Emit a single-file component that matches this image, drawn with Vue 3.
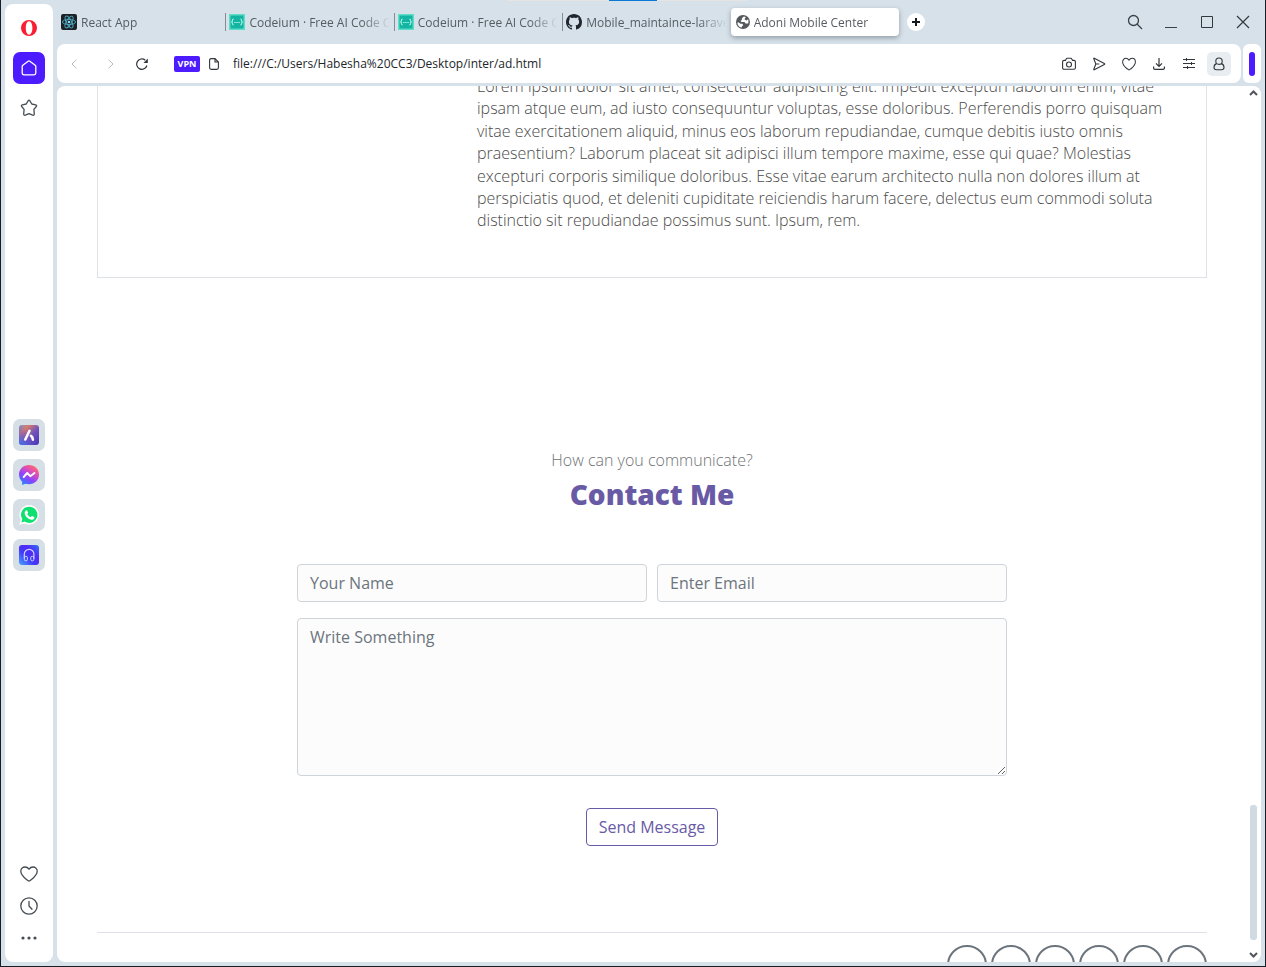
<script setup>
import { ref } from 'vue'

const tabs = [
  { icon: 'react', title: 'React App' },
  { icon: 'codeium', title: 'Codeium · Free AI Code C' },
  { icon: 'codeium', title: 'Codeium · Free AI Code C' },
  { icon: 'github', title: 'Mobile_maintaince-larave' },
  { icon: 'globe', title: 'Adoni Mobile Center' },
]
const active = ref(4)
const address = ref('file:///C:/Users/Habesha%20CC3/Desktop/inter/ad.html')
const name = ref('')
const email = ref('')
const message = ref('')
const socials = ['Facebook', 'Twitter', 'Google', 'Linkedin', 'Github', 'Youtube']
</script>

<template>
  <div class="window">
    <div class="desktop-strip"><span class="strip-accent"></span></div>

    <nav class="sidebar" aria-label="Sidebar">
      <div class="side-group">
        <button class="side-btn" aria-label="Opera menu">
          <svg width="16" height="16" viewBox="0 0 16 16"><path fill="#fa1e32" fill-rule="evenodd" d="M8 0a8 8 0 1 0 0 16A8 8 0 0 0 8 0Zm0 1.3c2 0 3.400 2.900 3.400 6.700S10 14.700 8 14.700 4.800 11.800 4.800 8 6 1.300 8 1.300Z" /></svg>
        </button>
        <button class="side-btn home" aria-label="Start page">
          <svg width="16" height="16" viewBox="0 0 16 16" fill="none" stroke="#fff" stroke-width="1.3" stroke-linejoin="round"><path d="M1.200 6.600Q1.200 5.900 1.800 5.300L7.200 1.200Q8 .6 8.800 1.200L14.200 5.300Q14.800 5.900 14.800 6.600V13Q14.800 14.800 13 14.800H3Q1.200 14.800 1.200 13Z" /></svg>
        </button>
        <button class="side-btn" aria-label="Bookmarks">
          <svg width="18" height="18" viewBox="0 0 18 18" fill="none" stroke="#454d54" stroke-width="1.3" stroke-linejoin="round"><path d="M8.100 1.800Q9 .6 9.900 1.800L11.800 5 15.700 5.800Q17.200 6.300 16.300 7.500L13.900 10.400 14.300 14.900Q14.300 16.600 12.700 16.200L9 14.700 5.300 16.200Q3.700 16.600 3.700 14.900L4.100 10.400 1.700 7.500Q.8 6.300 2.300 5.800L6.200 5Z" /></svg>
        </button>
      </div>

      <div class="side-group apps">
        <button class="side-btn app" aria-label="Aria">
          <svg width="20" height="20" viewBox="0 0 20 20">
            <defs>
              <linearGradient id="aria" x1="0" y1="0" x2="1" y2="1"><stop offset="0" stop-color="#7a9bc8" /><stop offset=".25" stop-color="#d77a6c" /><stop offset=".55" stop-color="#7554b8" /><stop offset="1" stop-color="#4532b8" /></linearGradient>
              <linearGradient id="ariaBlue" x1="0" y1="1" x2=".6" y2=".5"><stop offset="0" stop-color="#3979f5" /><stop offset="1" stop-color="#6a45cf" stop-opacity="0" /></linearGradient>
            </defs>
            <rect width="20" height="20" rx="3" fill="url(#aria)" /><rect width="20" height="20" rx="3" fill="url(#ariaBlue)" />
            <path d="M6.300 14.500 10.500 5.800M12 10.800Q13.600 11.800 13.900 14.600" stroke="#fff" stroke-width="2.600" stroke-linecap="round" fill="none" />
          </svg>
        </button>
        <button class="side-btn app" aria-label="Messenger">
          <svg width="20" height="20" viewBox="0 0 20 20">
            <defs><linearGradient id="msg" x1=".1" y1="1" x2=".75" y2="0"><stop offset="0" stop-color="#0e91ff" /><stop offset=".4" stop-color="#8b42ff" /><stop offset=".75" stop-color="#e64fae" /><stop offset="1" stop-color="#ff6d66" /></linearGradient></defs>
            <path fill="url(#msg)" d="M10 0C4.300 0 0 4.100 0 9.600c0 2.900 1.200 5.400 3.200 7.100V20l3.200-1.200c1.100.3 2.300.5 3.600.5 5.700 0 10-4.100 10-9.700S15.700 0 10 0Z" />
            <path d="m4.700 12 3.500-4 3.100 3.200L15.500 8" fill="none" stroke="#fff" stroke-width="1.900" stroke-linejoin="round" stroke-linecap="round" />
          </svg>
        </button>
        <button class="side-btn app" aria-label="WhatsApp">
          <svg width="20" height="20" viewBox="0 0 20 20">
            <path fill="#fff" d="M10.200 0A9.800 9.800 0 0 0 1.700 14.700L.3 19.800l5.100-1.400A9.800 9.800 0 1 0 10.200 0Z" />
            <path fill="#10e070" d="M10.200 1.700A8.100 8.100 0 0 0 3.300 14.100l-.9 3.300 3.400-.9A8.100 8.100 0 1 0 10.200 1.700Z" />
            <path fill="#fff" d="M7.100 5.500c.4-.3.9-.2 1.100.2l.8 1.800c.1.300 0 .6-.8 1.500.9 1.600 2 2.500 3.600 3.200.7-.9 1-1.300 1.400-1.100l1.900.9c.4.200.4.700.2 1.200-.4 1-1.500 1.600-2.600 1.500-3.300-.4-6.500-3.300-7-6.300-.2-1.200.4-2.300 1.400-2.900Z" />
          </svg>
        </button>
        <button class="side-btn app" aria-label="Player">
          <svg width="20" height="20" viewBox="0 0 20 20">
            <defs><linearGradient id="player" x1="0" y1="1" x2="1" y2="0"><stop offset="0" stop-color="#46a6ff" /><stop offset=".4" stop-color="#4338fa" /><stop offset=".65" stop-color="#5229f5" /><stop offset="1" stop-color="#2f72ff" /></linearGradient></defs>
            <rect width="20" height="20" rx="3" fill="url(#player)" />
            <path d="M5.300 13.500V9.100a4.800 4.800 0 0 1 9.600 0v4.400" fill="none" stroke="#c8d7ff" stroke-width="1.200" />
            <rect x="5.400" y="11.300" width="3" height="4.600" rx="1.400" fill="none" stroke="#c8d7ff" /><rect x="11.800" y="11.300" width="3" height="4.600" rx="1.400" fill="none" stroke="#c8d7ff" />
          </svg>
        </button>
      </div>

      <div class="side-group tight">
        <button class="side-btn" aria-label="Favourites">
          <svg width="18" height="18" viewBox="0 0 18 18" fill="none" stroke="#454d54" stroke-width="1.300" stroke-linejoin="round"><path d="M9 16.200Q8.300 16.200 6.500 14.600C2.800 11.500.8 9.100.8 6.300.8 3.800 2.700 2 5 2c1.800 0 3.200 1 4 2.200C9.800 3 11.200 2 13 2c2.300 0 4.200 1.800 4.200 4.300 0 2.800-2 5.200-5.700 8.300Q9.700 16.200 9 16.200Z" /></svg>
        </button>
        <button class="side-btn" aria-label="History">
          <svg width="18" height="18" viewBox="0 0 18 18" fill="none" stroke="#454d54" stroke-width="1.300" stroke-linecap="round"><circle cx="9" cy="9" r="8.200" /><path d="M9 4.500V9l3 3.300" /></svg>
        </button>
        <button class="side-btn" aria-label="More">
          <svg width="16" height="4" viewBox="0 0 16 4" fill="#454d54"><circle cx="2" cy="2" r="1.600" /><circle cx="8" cy="2" r="1.600" /><circle cx="14" cy="2" r="1.600" /></svg>
        </button>
      </div>
    </nav>

    <div class="main">
      <header class="tabbar">
        <div class="tabs" role="tablist">
          <button v-for="(tab, i) in tabs" :key="i" class="tab" :class="{ active: i === active }" role="tab" :aria-selected="i === active" @click="active = i">
            <svg v-if="tab.icon === 'react'" class="fav" width="16" height="16" viewBox="0 0 16 16"><rect width="16" height="16" rx="2" fill="#1d2126" /><g fill="none" stroke="#4fa9c0" stroke-width=".9"><ellipse cx="8" cy="8" rx="6.600" ry="2.600" /><ellipse cx="8" cy="8" rx="6.600" ry="2.600" transform="rotate(60 8 8)" /><ellipse cx="8" cy="8" rx="6.600" ry="2.600" transform="rotate(120 8 8)" /></g><circle cx="8" cy="8" r="1.300" fill="#8fe0f2" /></svg>
            <svg v-else-if="tab.icon === 'codeium'" class="fav" width="16" height="16" viewBox="0 0 16 16"><rect width="16" height="16" fill="#5ddcc8" /><rect x="1.500" y="1.500" width="13" height="13" fill="#13b5a2" /><path d="M4.600 5q-1.200 0-1.200 1.200v.9q0 .9-.9.900.9 0 .9.900v.9q0 1.200 1.200 1.200M11.400 5q1.200 0 1.200 1.200v.9q0 .9.900.9-.9 0-.9.900v.9q0 1.200-1.200 1.200" fill="none" stroke="#c9fff5" stroke-width="1" /><path d="M5.300 8.500h1.200M7.400 8.500h1.200M9.500 8.500h1.200" stroke="#c9fff5" stroke-width="1.200" /></svg>
            <svg v-else-if="tab.icon === 'github'" class="fav" width="16" height="16" viewBox="0 0 16 16"><path fill="#20262c" d="M8 0C3.580 0 0 3.580 0 8c0 3.540 2.290 6.530 5.470 7.590.4.070.55-.17.55-.38 0-.19-.01-.82-.01-1.490-2.010.37-2.530-.49-2.690-.94-.09-.23-.48-.94-.82-1.130-.28-.15-.68-.52-.01-.53.63-.01 1.080.58 1.230.82.72 1.210 1.870.87 2.330.66.07-.52.28-.87.51-1.070-1.780-.2-3.640-.89-3.640-3.950 0-.87.31-1.590.82-2.150-.08-.2-.36-1.020.08-2.120 0 0 .67-.21 2.200.82.640-.18 1.320-.27 2-.27s1.360.09 2 .27c1.530-1.040 2.200-.82 2.200-.82.44 1.100.16 1.920.08 2.120.51.56.82 1.270.82 2.150 0 3.070-1.870 3.750-3.650 3.950.29.25.54.73.54 1.480 0 1.070-.01 1.930-.01 2.200 0 .21.15.46.55.38A8.010 8.010 0 0 0 16 8c0-4.420-3.580-8-8-8Z" /></svg>
            <svg v-else class="fav globe" width="14" height="14" viewBox="0 0 14 14"><circle cx="7" cy="7" r="7" fill="#55585c" /><path fill="#fff" d="M7.800 1.400 5.900 3.300v1.500L4.500 5.900l1 1h3l1 1.600h2.700Q13 6.200 12.200 4.200L10.400 5.500 8.500 4.200 9.800 2ZM1.400 7.400Q1.500 11.500 5.500 12.500L6.200 11 7.300 10.300 6.400 8.800 4.300 8.700 2.900 7.400Z" /></svg>
            <span class="tab-title">{{ tab.title }}</span>
          </button>
        </div>
        <button class="new-tab" aria-label="New tab"><svg width="8" height="8" viewBox="0 0 8 8" stroke="#15181c" stroke-width="2"><path d="M4 0v8M0 4h8" /></svg></button>
        <div class="win-controls">
          <button aria-label="Search tabs"><svg width="16" height="16" viewBox="0 0 16 16" fill="none" stroke="#3b4146" stroke-width="1.300"><circle cx="6.500" cy="6.500" r="5" /><path d="m10 10 5 5" /></svg></button>
          <button aria-label="Minimize"><svg width="14" height="14" viewBox="0 0 14 14" stroke="#3b4146"><path d="M1 12.500h12" /></svg></button>
          <button aria-label="Maximize"><svg width="14" height="14" viewBox="0 0 14 14" fill="none" stroke="#33383d"><path d="M1.500 1.500h11v11h-11z" /></svg></button>
          <button aria-label="Close"><svg width="14" height="14" viewBox="0 0 14 14" stroke="#33383d" stroke-width="1.200"><path d="m1 1 12 12M13 1 1 13" /></svg></button>
        </div>
      </header>

      <div class="toolbar">
        <div class="address-bar">
          <div class="nav-buttons">
            <button aria-label="Back"><svg width="6" height="10" viewBox="0 0 6 10" fill="none" stroke="#b9bec2"><path d="M5.500.5 1 5l4.500 4.500" /></svg></button>
            <button class="forward" aria-label="Forward"><svg width="6" height="10" viewBox="0 0 6 10" fill="none" stroke="#b9bec2"><path d="M.5.5 5 5 .5 9.500" /></svg></button>
            <button class="reload" aria-label="Reload"><svg width="12" height="12" viewBox="0 0 12 12"><path d="M10.900 7.500A5.200 5.200 0 1 1 9.300 2.200" fill="none" stroke="#30363b" stroke-width="1.200" /><path d="M11.800.6v4.300H7.500Z" fill="#30363b" /></svg></button>
          </div>
          <button class="vpn">VPN</button>
          <svg class="doc" width="10" height="12" viewBox="0 0 10 12" fill="none" stroke="#30363b" stroke-width="1.100"><path d="M.6 2.200Q.6.600 2.200.600H6L9.400 4v5.800q0 1.600-1.600 1.600H2.200Q.6 11.400.6 9.800ZM6 .6V4h3.400" /></svg>
          <input v-model="address" class="url" type="text" aria-label="Address" />
          <div class="tools">
            <button aria-label="Snapshot"><svg width="14" height="14" viewBox="0 0 14 14" fill="none" stroke="#30363b" stroke-width="1.100"><path d="M.6 4.800Q.6 3.400 2 3.400h1.500l.8-1.700q.2-.500.800-.500h3.800q.6 0 .8.500l.8 1.700H12q1.400 0 1.400 1.400v6q0 1.400-1.400 1.400H2Q.6 12.200.6 10.800Z" /><circle cx="7" cy="7.500" r="2.500" /></svg></button>
            <button aria-label="Send to flow"><svg width="14" height="14" viewBox="0 0 14 14" fill="none" stroke="#30363b" stroke-width="1.100" stroke-linejoin="round"><path d="M1.800 1.800Q1.400 1 2.300 1.200L12.300 6.500q.9.500 0 1L2.300 12.800q-.9.200-.5-.6L3.800 7Z M3.800 7h3.500" /></svg></button>
            <button aria-label="Favourite"><svg width="14" height="14" viewBox="0 0 18 17" fill="none" stroke="#30363b" stroke-width="1.300" stroke-linejoin="round"><path d="M9 16.200Q8.300 16.200 6.500 14.600C2.800 11.500.8 9.100.8 5.800.8 3.200 2.700 1.200 5 1.200c1.800 0 3.200 1 4 2.400.8-1.400 2.200-2.400 4-2.400 2.300 0 4.200 2 4.200 4.600 0 3.300-2 5.700-5.700 8.800Q9.700 16.200 9 16.200Z" /></svg></button>
            <button aria-label="Downloads"><svg width="12" height="12" viewBox="0 0 12 12" fill="none" stroke="#30363b" stroke-width="1.200"><path d="M6 0v8M3 5.300l3 3 3-3M.6 8.500v1.400q0 1.400 1.400 1.400h8q1.400 0 1.400-1.400V8.500" /></svg></button>
            <button aria-label="Easy setup"><svg width="12" height="11" viewBox="0 0 12 11" stroke="#30363b"><path d="M0 1.500h12M0 5.500h12M0 9.500h12M3.500 0v3M8.500 4v3M4.500 8v3" /></svg></button>
            <button class="profile" aria-label="Profile"><svg width="12" height="14" viewBox="0 0 12 14" fill="none" stroke="#30363b" stroke-width="1.100"><circle cx="6" cy="4.200" r="3.200" /><path d="M3.700 6.600Q1 7.300 1 10.500q0 2.200 2.500 2.200h5q2.500 0 2.500-2.200 0-3.200-2.700-3.900" /></svg></button>
          </div>
        </div>
        <button class="panel-toggle" aria-label="Side panel"><span></span></button>
      </div>

      <div class="viewport">
        <main class="page">
          <div class="container">
            <article class="card">
              <p>Lorem ipsum dolor sit amet, consectetur adipisicing elit. Impedit excepturi laborum enim, vitae ipsam atque eum, ad iusto consequuntur voluptas, esse doloribus. Perferendis porro quisquam vitae exercitationem aliquid, minus eos laborum repudiandae, cumque debitis iusto omnis praesentium? Laborum placeat sit adipisci illum tempore maxime, esse qui quae? Molestias excepturi corporis similique doloribus. Esse vitae earum architecto nulla non dolores illum at perspiciatis quod, et deleniti cupiditate reiciendis harum facere, delectus eum commodi soluta distinctio sit repudiandae possimus sunt. Ipsum, rem.</p>
            </article>

            <section class="contact">
              <p class="lead">How can you communicate?</p>
              <h2>Contact Me</h2>
              <form @submit.prevent>
                <input v-model="name" type="text" placeholder="Your Name" aria-label="Your Name" />
                <input v-model="email" type="email" placeholder="Enter Email" aria-label="Enter Email" />
                <textarea v-model="message" placeholder="Write Something" aria-label="Write Something"></textarea>
                <button class="send" type="submit">Send Message</button>
              </form>
            </section>

            <footer class="footer">
              <a v-for="s in socials" :key="s" href="#" class="social" :aria-label="s"></a>
            </footer>
          </div>
        </main>
        <div class="scrollbar">
          <svg width="9" height="6" viewBox="0 0 9 6" fill="none" stroke="#50555a" stroke-width="2"><path d="M1 5 4.500 1.500 8 5" /></svg>
          <div class="thumb"></div>
          <svg width="9" height="6" viewBox="0 0 9 6" fill="none" stroke="#50555a" stroke-width="2"><path d="M1 1 4.500 4.500 8 1" /></svg>
        </div>
      </div>
    </div>
  </div>
</template>

<style>
body {
  margin: 0;
  background: #d7e1e9;
}
</style>

<style scoped>
* {
  box-sizing: border-box;
}
button {
  border: 0;
  padding: 0;
  margin: 0;
  background: none;
  font: inherit;
  color: inherit;
}
svg {
  display: block;
  flex: none;
}
.window {
  position: relative;
  display: flex;
  gap: 4px;
  height: 100vh;
  padding: 0 4px;
  background: #d7e1e9;
  border: 1px solid #1b1d24;
  border-top: 0;
  overflow: hidden;
  font-family: "Open Sans", "Noto Sans", sans-serif;
}
.desktop-strip {
  position: absolute;
  top: 0;
  left: 40%;
  width: 240px;
  height: 1px;
  background: #e6e4e2;
}
.strip-accent {
  display: block;
  width: 48px;
  height: 1px;
  margin-left: 102px;
  background: #0a78d7;
}

.sidebar {
  flex: none;
  display: flex;
  flex-direction: column;
  justify-content: space-between;
  align-items: center;
  width: 48px;
  margin: 4px 0;
  padding: 8px 0;
  background: #fff;
  border-radius: 8px;
}
.side-group {
  display: flex;
  flex-direction: column;
  gap: 8px;
}
.side-group.apps {
  padding-top: 8px;
}
.side-group.tight {
  gap: 0;
}
.side-btn {
  display: flex;
  align-items: center;
  justify-content: center;
  width: 32px;
  height: 32px;
  border-radius: 7px;
}
.side-btn.home {
  background: #4d1bff;
}
.side-btn.app {
  background: #d5dfe5;
}

.main {
  flex: 1;
  min-width: 0;
  display: flex;
  flex-direction: column;
  padding-bottom: 4px;
}
.tabbar {
  display: flex;
  align-items: center;
  height: 44px;
}
.tabs {
  display: flex;
  flex: 0 1 842px;
  min-width: 0;
}
.tab {
  position: relative;
  flex: 1 1 0;
  min-width: 0;
  display: flex;
  align-items: center;
  gap: 4px;
  height: 28px;
  padding: 0 4px;
  border-radius: 4px;
  text-align: left;
  color: #555c62;
  font-size: 12px;
}
.tab + .tab:not(.active)::before {
  content: "";
  position: absolute;
  left: 0;
  top: 5px;
  width: 1px;
  height: 18px;
  background: #858c93;
}
.tab-title {
  flex: 1;
  overflow: hidden;
  white-space: nowrap;
  mask-image: linear-gradient(to right, #000 calc(100% - 28px), transparent);
}
.tab.active {
  background: #fff;
  box-shadow: 0 2px 5px rgba(60, 75, 90, 0.45);
}
.globe {
  margin-left: 1px;
}
.new-tab {
  flex: none;
  display: flex;
  align-items: center;
  justify-content: center;
  width: 18px;
  height: 18px;
  margin-left: 8px;
  border-radius: 50%;
  background: #fff;
}
.win-controls {
  display: flex;
  margin-left: auto;
}
.win-controls button {
  display: flex;
  align-items: center;
  justify-content: center;
  width: 36px;
  height: 36px;
}

.toolbar {
  display: flex;
  gap: 2px;
  height: 39px;
  margin-bottom: 3px;
}
.address-bar {
  flex: 1;
  min-width: 0;
  display: flex;
  align-items: center;
  padding: 0 10px 0 0;
  background: #fff;
  border-radius: 8px;
}
.nav-buttons {
  display: flex;
  margin-right: 21px;
}
.nav-buttons button {
  display: flex;
  align-items: center;
  justify-content: center;
  width: 34px;
  height: 32px;
}
.nav-buttons .forward {
  width: 40px;
}
.nav-buttons .reload {
  width: 22px;
}
.vpn {
  width: 26px;
  height: 16px;
  border-radius: 2px;
  background: #4d1bff;
  color: #fff;
  font-size: 9px;
  font-weight: 700;
  line-height: 16px;
  text-align: center;
}
.doc {
  margin: 0 14px 0 9px;
}
.url {
  flex: 1;
  min-width: 0;
  padding: 0;
  border: 0;
  outline: 0;
  background: none;
  color: #22262a;
  font: 12px "Open Sans", "Noto Sans", sans-serif;
}
.tools {
  display: flex;
  align-items: center;
  gap: 6px;
}
.tools button {
  display: flex;
  align-items: center;
  justify-content: center;
  width: 24px;
  height: 24px;
  border-radius: 5px;
}
.tools .profile {
  background: #e8edf1;
}
.panel-toggle {
  display: flex;
  align-items: center;
  justify-content: center;
  width: 18px;
  background: #fff;
  border-radius: 6px;
}
.panel-toggle span {
  width: 6px;
  height: 24px;
  border-radius: 3px;
  background: #4d1bff;
}

.viewport {
  flex: 1;
  min-height: 0;
  display: flex;
  overflow: hidden;
  background: #fff;
  border-radius: 8px;
}
.page {
  flex: 1;
  min-width: 0;
  overflow: hidden;
}
.container {
  max-width: 1110px;
  margin: 0 auto;
}
.card {
  margin-top: -12px;
  padding: 0 38px 45px 379px;
  border: 1px solid #dee2e6;
}
.card p {
  margin: 0;
  color: #4b4b4b;
  font-size: 16px;
  font-weight: 300;
  line-height: 1.4;
}
.contact {
  padding-top: 170px;
  text-align: center;
}
.lead {
  margin: 0;
  color: #6f7275;
  font-size: 16px;
  font-weight: 300;
  line-height: 24px;
}
h2 {
  margin: 0 0 48px;
  color: #695aa6;
  font-size: 28px;
  font-weight: 800;
  line-height: 44px;
}
form {
  display: grid;
  grid-template-columns: 1fr 1fr;
  gap: 16px 10px;
  max-width: 710px;
  margin: 0 auto;
}
form input,
form textarea {
  width: 100%;
  min-width: 0;
  padding: 6px 12px;
  border: 1px solid #ced4da;
  border-radius: 4px;
  background: #fcfcfc;
  color: #495057;
  font: 16px/24px "Open Sans", "Noto Sans", sans-serif;
}
form input {
  height: 38px;
}
form textarea {
  grid-column: 1 / -1;
  height: 158px;
  resize: vertical;
}
::placeholder {
  color: #6c757d;
  opacity: 1;
}
.send {
  grid-column: 1 / -1;
  justify-self: center;
  margin-top: 16px;
  padding: 6px 12px;
  border: 1px solid #695aa6;
  border-radius: 4px;
  color: #695aa6;
  font-size: 16px;
  line-height: 24px;
}
.footer {
  display: flex;
  justify-content: flex-end;
  gap: 4px;
  margin-top: 86px;
  padding-top: 12px;
  border-top: 1px solid #dee2e6;
}
.social {
  width: 40px;
  height: 40px;
  border: 2px solid #6c757d;
  border-radius: 50%;
}

.scrollbar {
  flex: none;
  display: flex;
  flex-direction: column;
  align-items: center;
  width: 14px;
  padding: 4px 1px 4px 0;
}
.thumb {
  width: 7px;
  height: 135px;
  margin: auto 0 12px;
  border-radius: 3px;
  background: #cfdae2;
}
</style>
